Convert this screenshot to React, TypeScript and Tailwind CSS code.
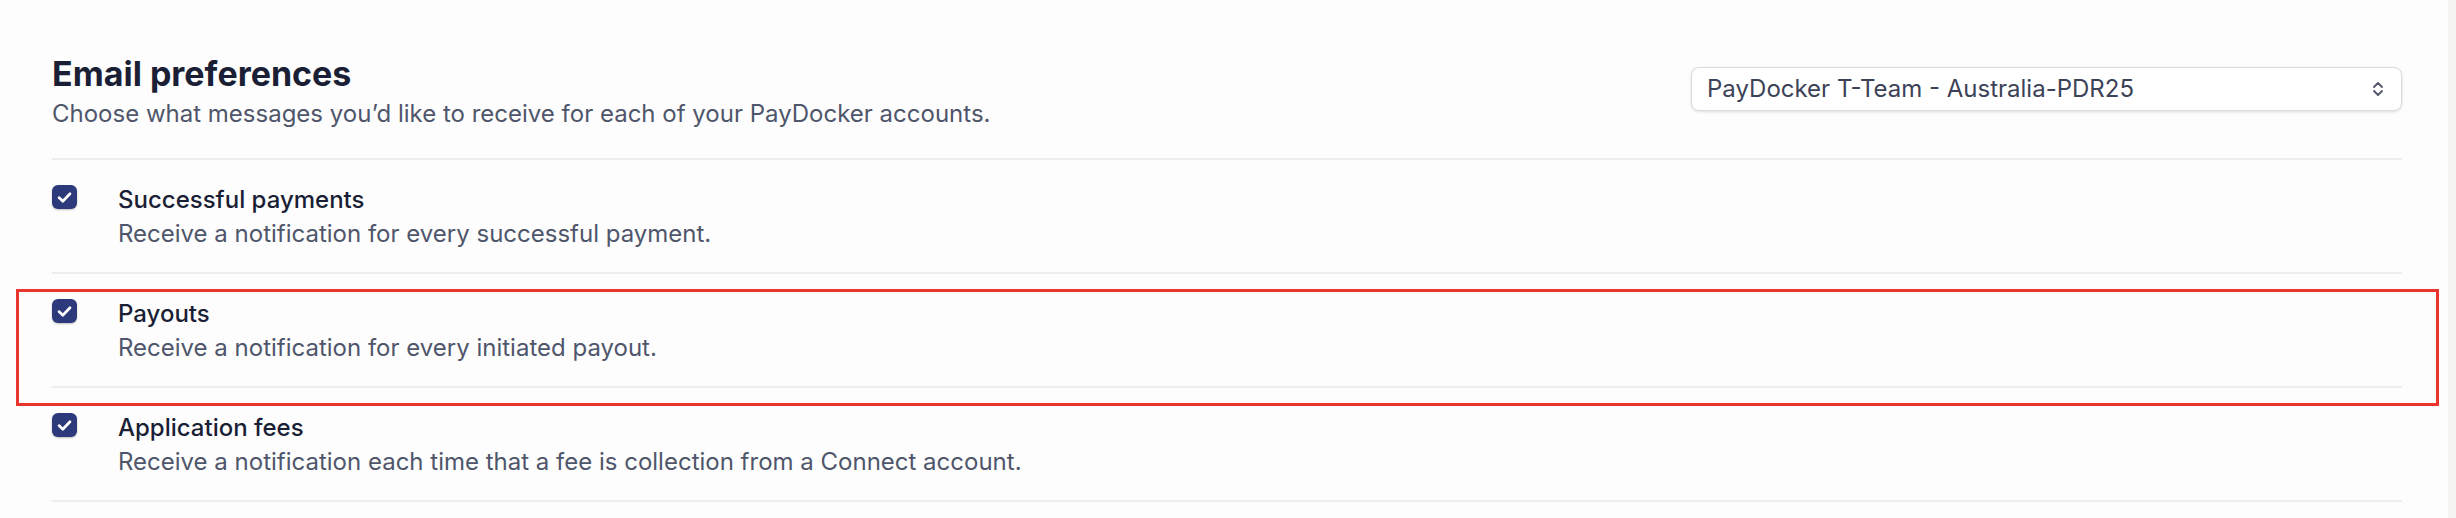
import React from 'react';

type Pref = {
  title: string;
  description: string;
  checked: boolean;
};

const prefs: Pref[] = [
  {
    title: 'Successful payments',
    description: 'Receive a notification for every successful payment.',
    checked: true,
  },
  {
    title: 'Payouts',
    description: 'Receive a notification for every initiated payout.',
    checked: true,
  },
  {
    title: 'Application fees',
    description: 'Receive a notification each time that a fee is collection from a Connect account.',
    checked: true,
  },
];

const CheckBox: React.FC<{ checked: boolean }> = ({ checked }) => (
  <div
    className={`mt-[2px] flex h-[24px] w-[25px] shrink-0 items-center justify-center rounded-[6px] shadow-[0_1px_2px_rgba(0,0,0,0.25)] ${
      checked ? 'bg-[#2c3a7b]' : 'border border-gray-300 bg-white'
    }`}
  >
    {checked && (
      <svg width="15" height="13" viewBox="0 0 15 13" fill="none">
        <path
          d="M2 6.6 L5.8 10.2 L13 2.8"
          stroke="white"
          strokeWidth="2.7"
          strokeLinecap="round"
          strokeLinejoin="round"
        />
      </svg>
    )}
  </div>
);

const UpDown: React.FC = () => (
  <svg width="12" height="16" viewBox="0 0 12 16" fill="none">
    <path d="M2 6 L6 2 L10 6" stroke="#4f566b" strokeWidth="1.8" strokeLinecap="round" strokeLinejoin="round" />
    <path d="M2 10 L6 14 L10 10" stroke="#4f566b" strokeWidth="1.8" strokeLinecap="round" strokeLinejoin="round" />
  </svg>
);

const PrefRow: React.FC<{ pref: Pref }> = ({ pref }) => (
  <div className="flex border-t-2 border-[#ebeef1] pt-[23px] pb-[21px]">
    <CheckBox checked={pref.checked} />
    <div className="ml-[41px]">
      <div className="text-[24px] font-medium leading-[34px] text-[#1a1f36]">{pref.title}</div>
      <div className="text-[24px] leading-[34px] text-[#4f566b]">{pref.description}</div>
    </div>
  </div>
);

export default function App() {
  return (
    <div
      className="relative flex h-[518px] w-[2456px] bg-[#fdfdfd]"
      style={{ fontFamily: 'Inter, "Noto Sans", sans-serif' }}
    >
      <div className="flex-1 pt-[55px] pl-[52px] pr-[46px]">
        <div className="flex items-start justify-between pb-[27px]">
          <div>
            <h1 className="text-[34px] font-bold leading-[38px] text-[#1a1f36]">Email preferences</h1>
            <p className="mt-[4px] text-[24px] leading-[34px] text-[#4f566b]">
              Choose what messages you’d like to receive for each of your PayDocker accounts.
            </p>
          </div>
          <div className="mt-[12px] flex h-[44px] w-[711px] items-center justify-between rounded-[8px] border border-[#d8dbe1] bg-white pl-[15px] pr-[17px] shadow-[0_1px_3px_rgba(0,0,0,0.12)]">
            <span className="text-[24px] text-[#3c4257]">PayDocker T-Team - Australia-PDR25</span>
            <UpDown />
          </div>
        </div>
        {prefs.map((p) => (
          <PrefRow key={p.title} pref={p} />
        ))}
        <div className="border-t-2 border-[#ebeef1]" />
      </div>
      <div className="w-[8px] bg-[#f4f3f1]" />

      {/* annotation highlight */}
      <div className="pointer-events-none absolute left-[16px] top-[289px] h-[117px] w-[2423px] border-[3px] border-[#e8352e]" />
    </div>
  );
}
